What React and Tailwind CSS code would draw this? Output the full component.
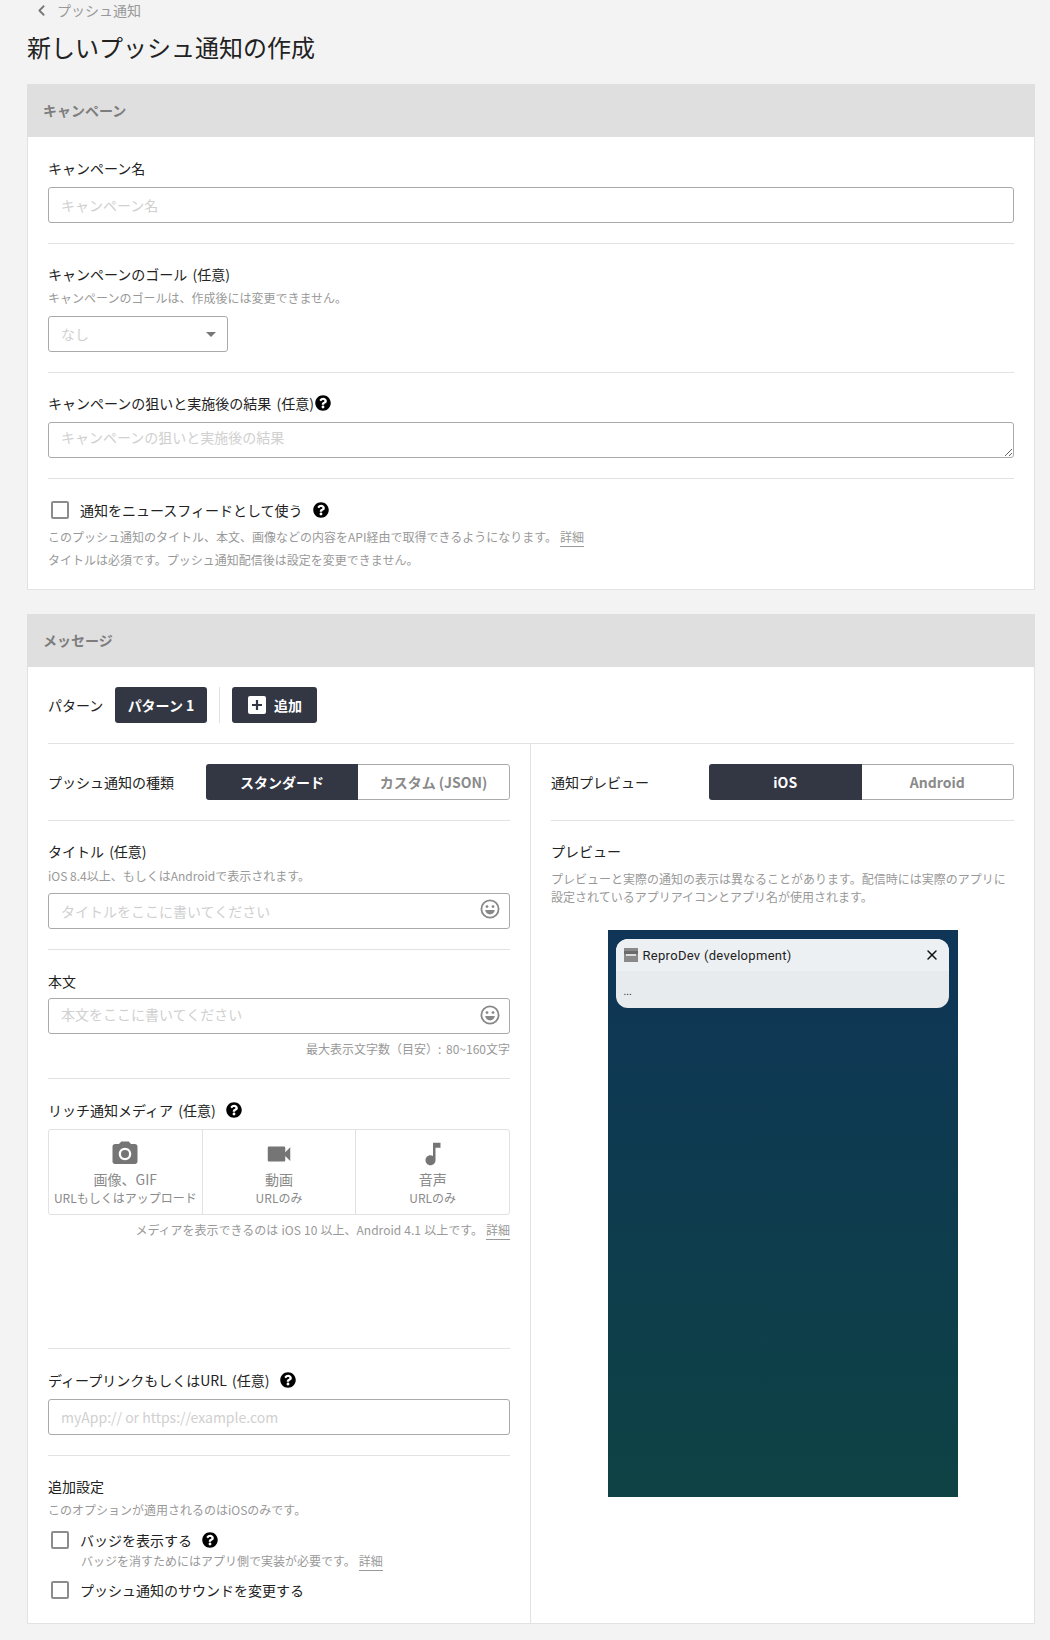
import React from 'react'
import { ChevronLeft, X } from 'lucide-react'
import { FaQuestionCircle } from 'react-icons/fa'
import { MdCameraAlt, MdVideocam, MdMusicNote } from 'react-icons/md'

const inputClass = "block w-full h-9 rounded-[3px] border border-[#aaaaaa] bg-white px-3 text-sm text-[#333] outline-none placeholder:text-[#d0d0d0]"

function Help({ className = "" }) {
  return <FaQuestionCircle size={16} className={`inline-block shrink-0 text-black ${className}`} />
}

function Smile({ className = "top-[6px]" }) {
  return (
    <svg viewBox="0 0 20 20" className={`absolute right-[10px] h-5 w-5 ${className}`}>
      <circle cx="10" cy="10" r="8.6" fill="none" stroke="#888" strokeWidth="1.8" />
      <circle cx="7" cy="7.6" r="1.4" fill="#888" />
      <circle cx="13" cy="7.6" r="1.4" fill="#888" />
      <path d="M5.2 11h9.6c-.3 2.8-2.3 4.4-4.8 4.4s-4.5-1.6-4.8-4.4z" fill="#888" />
    </svg>
  )
}

function Label({ children, className = "" }) {
  return <div className={`flex items-center text-sm leading-5 text-[#222] [word-spacing:2px] ${className}`}>{children}</div>
}

function Sub({ children, className = "" }) {
  return <div className={`text-xs leading-[18px] text-[#999] ${className}`}>{children}</div>
}

function More() {
  return <span className="ml-[3px] inline-block border-b border-[#999] leading-[18px]">詳細</span>
}

function Section({ title, children }) {
  return (
    <section className="border border-t-0 border-[#e2e2e2] bg-white">
      <h2 className="-mx-px h-[53px] bg-[#dfdfdf] pl-[16px] text-sm font-bold leading-[53px] text-[#7d7d7d]">{title}</h2>
      {children}
    </section>
  )
}

function Toggle({ left, right, className = "" }) {
  return (
    <div className={`flex h-9 overflow-hidden rounded-[3px] text-sm font-bold leading-9 ${className}`}>
      <div className="w-1/2 bg-[#333643] text-center text-white">{left}</div>
      <div className="w-1/2 rounded-r-[3px] border border-l-0 border-[#aaaaaa] text-center leading-[34px] text-[#8a8a8a]">{right}</div>
    </div>
  )
}

function Check({ children, help, sub }) {
  return (
    <div>
      <label className="flex h-5 items-center">
        <input type="checkbox" className="ml-[3px] h-[18px] w-[18px] appearance-none rounded-[2px] border-2 border-[#8c8c8c] bg-white" />
        <span className="ml-[11px] text-sm text-[#222]">{children}</span>
        {help && <Help className="ml-[10px]" />}
      </label>
      {sub}
    </div>
  )
}

function Media({ icon, title, sub, className = "" }) {
  return (
    <div className={`flex flex-1 flex-col items-center pt-[10px] text-[#8a8a8a] ${className}`}>
      <div className="flex h-7 items-center text-[#757575]">{icon}</div>
      <div className="mt-px text-sm leading-5">{title}</div>
      <div className="text-xs leading-[17px]">{sub}</div>
    </div>
  )
}

export default function App() {
  return (
    <div className="min-h-[1640px] bg-[#f3f3f3] pl-[27px] pr-[15px] font-['Noto_Sans_CJK_JP','Noto_Sans',sans-serif]">
      <div className="flex h-5 items-center pl-[6px] text-sm text-[#999]">
        <ChevronLeft size={17} strokeWidth={2.5} className="text-[#777]" />
        <span className="ml-[7px]">プッシュ通知</span>
      </div>
      <h1 className="mt-[9px] h-[55px] text-2xl leading-9 text-[#222]">新しいプッシュ通知の作成</h1>

      <Section title="キャンペーン">
        <div className="px-5">
          <div className="border-b border-[#e2e2e2] pb-5 pt-[21px]">
            <Label className="mb-[9px]">キャンペーン名</Label>
            <input className={inputClass} placeholder="キャンペーン名" />
          </div>
          <div className="border-b border-[#e2e2e2] pb-5 pt-[20px]">
            <Label>キャンペーンのゴール (任意)</Label>
            <Sub className="mb-[9px] mt-[5px]">キャンペーンのゴールは、作成後には変更できません。</Sub>
            <div className="flex h-9 w-[180px] items-center justify-between rounded-[3px] border border-[#aaaaaa] pl-3 pr-[11px] text-sm text-[#d0d0d0]">
              なし
              <span className="h-0 w-0 border-x-[5px] border-t-[5px] border-x-transparent border-t-[#777]" />
            </div>
          </div>
          <div className="border-b border-[#e2e2e2] pb-5 pt-[20px]">
            <Label className="mb-[9px]">キャンペーンの狙いと実施後の結果 (任意)<Help className="ml-px" /></Label>
            <textarea rows={1} className={`${inputClass} py-[4px]`} placeholder="キャンペーンの狙いと実施後の結果" />
          </div>
          <div className="pb-[18px] pt-[21px]">
            <Check help>通知をニュースフィードとして使う</Check>
            <Sub className="mt-[5px] leading-[23px]">このプッシュ通知のタイトル、本文、画像などの内容をAPI経由で取得できるようになります。<More /></Sub>
            <Sub className="leading-[23px]">タイトルは必須です。プッシュ通知配信後は設定を変更できません。</Sub>
          </div>
        </div>
      </Section>

      <div className="h-[24px]" />

      <Section title="メッセージ">
        <div className="mx-5 flex items-center border-b border-[#e2e2e2] pb-5 pt-5">
          <span className="w-[67px] text-sm text-[#222]">パターン</span>
          <button className="h-9 w-[92px] rounded-[3px] bg-[#333643] text-sm font-bold text-white">パターン 1</button>
          <span className="mx-3 h-9 w-px bg-[#e2e2e2]" />
          <button className="flex h-9 w-[85px] items-center gap-2 rounded-[3px] bg-[#333643] pl-4 text-sm font-bold text-white">
            <svg viewBox="0 0 18 18" className="h-[18px] w-[18px]">
              <rect width="18" height="18" rx="2" fill="#fff" />
              <path d="M9 4v10M4 9h10" stroke="#333643" strokeWidth="2.2" />
            </svg>
            追加
          </button>
        </div>

        <div className="flex">
          <div className="w-[503px] border-r border-[#e2e2e2] px-5">
            <div className="flex items-center justify-between border-b border-[#e2e2e2] pb-5 pt-5">
              <span className="text-sm text-[#222]">プッシュ通知の種類</span>
              <Toggle className="w-[304px]" left="スタンダード" right="カスタム (JSON)" />
            </div>
            <div className="border-b border-[#e2e2e2] pb-5 pt-[20px]">
              <Label>タイトル (任意)</Label>
              <Sub className="mb-[8px] mt-[6px]">iOS 8.4以上、もしくはAndroidで表示されます。</Sub>
              <div className="relative">
                <input className={inputClass} placeholder="タイトルをここに書いてください" />
                <Smile />
              </div>
            </div>
            <div className="border-b border-[#e2e2e2] pb-[20px] pt-[21px]">
              <Label className="mb-[7px]">本文</Label>
              <div className="relative">
                <input className={`${inputClass} pb-[4px]`} placeholder="本文をここに書いてください" />
                <Smile className="top-[7px]" />
              </div>
              <Sub className="mt-[6px] text-right [word-spacing:2px]">最大表示文字数（目安）: 80~160文字</Sub>
            </div>
            <div className="h-[270px] border-b border-[#e2e2e2] pt-[21px]">
              <Label className="mb-[9px]">リッチ通知メディア (任意)<Help className="ml-[10px]" /></Label>
              <div className="flex h-[86px] rounded-[3px] border border-[#e2e2e2]">
                <Media className="border-r border-[#e2e2e2]" icon={<MdCameraAlt size={30} />} title="画像、GIF" sub="URLもしくはアップロード" />
                <Media className="border-r border-[#e2e2e2]" icon={<MdVideocam size={30} />} title="動画" sub="URLのみ" />
                <Media icon={<MdMusicNote size={30} />} title="音声" sub="URLのみ" />
              </div>
              <Sub className="mt-[6px] text-right [word-spacing:.5px]">メディアを表示できるのは iOS 10 以上、Android 4.1 以上です。<More /></Sub>
            </div>
            <div className="border-b border-[#e2e2e2] pb-5 pt-[21px]">
              <Label className="mb-[9px]">ディープリンクもしくはURL (任意)<Help className="ml-[11px]" /></Label>
              <input className={inputClass} placeholder="myApp:// or https://example.com" />
            </div>
            <div className="pb-[23px] pt-[20px]">
              <Label>追加設定</Label>
              <Sub className="mb-[11px] mt-[5px]">このオプションが適用されるのはiOSのみです。</Sub>
              <Check help sub={<Sub className="ml-[33px] mt-[2px]">バッジを消すためにはアプリ側で実装が必要です。<More /></Sub>}>バッジを表示する</Check>
              <div className="mt-[9px]">
                <Check>プッシュ通知のサウンドを変更する</Check>
              </div>
            </div>
          </div>

          <div className="flex-1 px-5">
            <div className="flex items-center justify-between border-b border-[#e2e2e2] pb-5 pt-5">
              <span className="text-sm text-[#222]">通知プレビュー</span>
              <Toggle className="w-[305px]" left="iOS" right="Android" />
            </div>
            <div className="pt-[20px]">
              <Label>プレビュー</Label>
              <Sub className="mt-[9px]">プレビューと実際の通知の表示は異なることがあります。配信時には実際のアプリに設定されているアプリアイコンとアプリ名が使用されます。</Sub>
            </div>
            <div className="mx-auto mt-[24px] h-[567px] w-[350px] bg-gradient-to-b from-[#0f3557] to-[#0e4244] pl-2 pr-[9px] pt-[9px]">
              <div className="overflow-hidden rounded-xl bg-[#e8ebee]">
                <div className="flex h-8 items-center bg-[#ecf0f3] pl-2 pr-[9px] text-[13px] tracking-[.3px] text-[#222] font-['Roboto',sans-serif]">
                  <svg viewBox="0 0 14 14" className="h-[14px] w-[14px]">
                    <rect width="14" height="14" fill="#8a8a8a" />
                    <rect y="3" width="14" height="3" fill="#6a6a6a" />
                    <rect x="2" y="6" width="10" height="2" fill="#ddd" />
                  </svg>
                  <span className="ml-[5px] flex-1 pt-px">ReproDev (development)</span>
                  <X size={16} strokeWidth={2.2} className="text-[#111]" />
                </div>
                <div className="h-[37px] pl-2 pt-[10px] text-[10px] leading-5 text-[#333]">...</div>
              </div>
            </div>
          </div>
        </div>
      </Section>
    </div>
  )
}
